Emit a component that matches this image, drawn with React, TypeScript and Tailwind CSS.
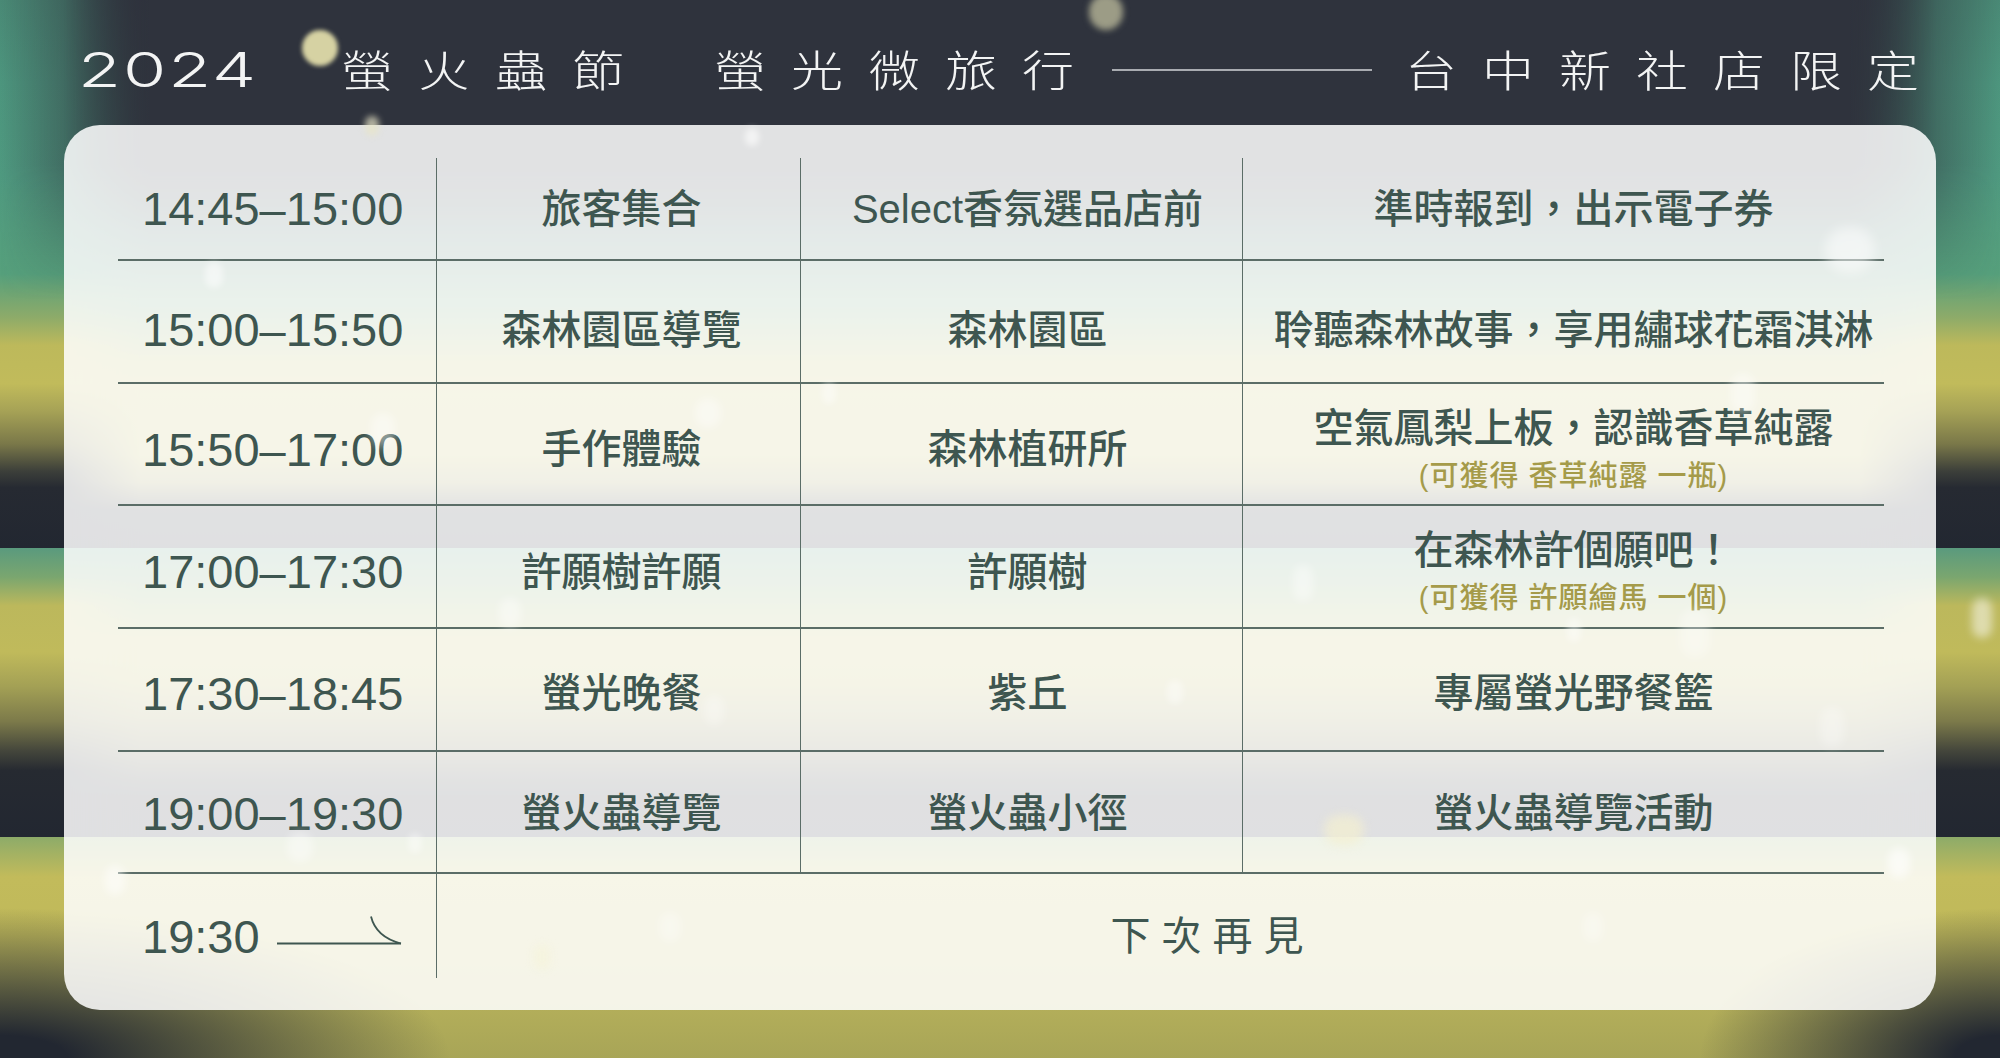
import React from 'react';

type Row = {
  time: string;
  act: string;
  place: string;
  desc: string;
  sub?: string;
  h: string;
  pad: string;
};

const rows: Row[] = [
  { time: '14:45–15:00', act: '旅客集合', place: 'Select香氛選品店前', desc: '準時報到，出示電子券', h: 'h-[103px]', pad: 'pt-0' },
  { time: '15:00–15:50', act: '森林園區導覽', place: '森林園區', desc: '聆聽森林故事，享用繡球花霜淇淋', h: 'h-[123px]', pad: 'pt-[16px]' },
  { time: '15:50–17:00', act: '手作體驗', place: '森林植研所', desc: '空氣鳳梨上板，認識香草純露', sub: '(可獲得 香草純露 一瓶)', h: 'h-[122px]', pad: 'pt-[10px]' },
  { time: '17:00–17:30', act: '許願樹許願', place: '許願樹', desc: '在森林許個願吧！', sub: '(可獲得 許願繪馬 一個)', h: 'h-[123px]', pad: 'pt-[10px]' },
  { time: '17:30–18:45', act: '螢光晚餐', place: '紫丘', desc: '專屬螢光野餐籃', h: 'h-[123px]', pad: 'pt-[7px]' },
  { time: '19:00–19:30', act: '螢火蟲導覽', place: '螢火蟲小徑', desc: '螢火蟲導覽活動', h: 'h-[122px]', pad: 'pt-[2px]' },
];

const bokeh: string[] = [
  'left-[302px] top-[30px] w-[36px] h-[36px] bg-[#d6d2a3] blur-[2px]',
  'left-[1089px] top-[-6px] w-[34px] h-[36px] bg-[#9c9c86] blur-[3px]',
  'left-[365px] top-[116px] w-[14px] h-[20px] bg-[#e8e6c8]/70 blur-[3px]',
  'left-[745px] top-[128px] w-[14px] h-[18px] bg-white/60 blur-[3px]',
  'left-[1825px] top-[227px] w-[50px] h-[46px] bg-white/50 blur-[6px]',
  'left-[287px] top-[832px] w-[26px] h-[30px] bg-white/40 blur-[4px]',
  'left-[408px] top-[833px] w-[14px] h-[20px] bg-white/40 blur-[3px]',
  'left-[105px] top-[865px] w-[20px] h-[30px] bg-white/50 blur-[4px]',
  'left-[659px] top-[912px] w-[22px] h-[30px] bg-white/30 blur-[4px]',
  'left-[533px] top-[944px] w-[18px] h-[26px] bg-[#f6f3d8]/50 blur-[4px]',
  'left-[704px] top-[695px] w-[20px] h-[30px] bg-white/30 blur-[4px]',
  'left-[1167px] top-[680px] w-[16px] h-[24px] bg-white/40 blur-[3px]',
  'left-[1820px] top-[707px] w-[24px] h-[40px] bg-white/30 blur-[5px]',
  'left-[1324px] top-[815px] w-[40px] h-[30px] bg-[#f4f0d0]/70 blur-[5px]',
  'left-[1888px] top-[848px] w-[22px] h-[30px] bg-white/60 blur-[4px]',
  'left-[1583px] top-[912px] w-[20px] h-[30px] bg-white/30 blur-[4px]',
  'left-[371px] top-[413px] w-[24px] h-[34px] bg-white/40 blur-[4px]',
  'left-[695px] top-[398px] w-[26px] h-[30px] bg-white/40 blur-[4px]',
  'left-[822px] top-[382px] w-[14px] h-[22px] bg-white/40 blur-[3px]',
  'left-[499px] top-[598px] w-[22px] h-[30px] bg-white/40 blur-[4px]',
  'left-[1731px] top-[373px] w-[24px] h-[40px] bg-white/40 blur-[4px]',
  'left-[1293px] top-[565px] w-[20px] h-[36px] bg-white/40 blur-[4px]',
  'left-[1567px] top-[618px] w-[14px] h-[24px] bg-white/40 blur-[3px]',
  'left-[1680px] top-[608px] w-[30px] h-[50px] bg-white/30 blur-[5px]',
  'left-[1972px] top-[598px] w-[20px] h-[40px] bg-white/50 blur-[4px]',
  'left-[205px] top-[262px] w-[18px] h-[26px] bg-white/50 blur-[3px]',
];

const headCjk =
  "inline-block font-['Noto_Sans_CJK_TC',sans-serif] text-[52px] font-light tracking-[25px] leading-none scale-y-[0.82] whitespace-nowrap";

const line = 'border-[#5b6d67]';

const edge1 =
  'bg-[image:linear-gradient(to_bottom,#4a8a76_0%,#4d967e_15%,#4f9a80_32%,#56a07c_50%,#8eab69_58%,#bdb95b_63%,#c1bb5b_70%,#a6a256_75%,#7a7849_81%,#3c3f3a_86%,#262a32_89%,#222731_100%)]';
const edge2 =
  'bg-[image:linear-gradient(to_bottom,#5a9a7e_0%,#7aa66f_10%,#bcb85c_20%,#c0ba5b_36%,#a3a055_48%,#7c7a4a_60%,#45473c_70%,#262a31_77%,#222731_100%)]';

export default function App() {
  return (
    <div className="relative w-[2000px] h-[1058px] overflow-hidden bg-[#222731] font-['Liberation_Sans','Noto_Sans_CJK_TC',sans-serif]">
      {/* background bands */}
      <div className="absolute inset-0 flex flex-col">
        <div className="relative h-[548px] bg-[image:linear-gradient(to_bottom,#2f333d_0%,#3a5f57_30%,#4f9a80_42%,#6ea276_56%,#b5b65e_66%,#c1bb5b_72%,#bcb75a_83%,#9a9653_88%,#5a5b43_91%,#2a2e33_93%,#222731_100%)]">
          <div className={`absolute left-0 top-0 bottom-0 w-[140px] ${edge1} [mask-image:linear-gradient(to_right,black_64px,transparent_140px)]`} />
          <div className={`absolute right-0 top-0 bottom-0 w-[140px] ${edge1} [mask-image:linear-gradient(to_left,black_64px,transparent_140px)]`} />
          <div className="absolute left-0 right-0 top-0 h-[300px] bg-[image:linear-gradient(to_right,rgba(47,51,61,0)_0px,#2f333d_150px,#2f333d_1850px,rgba(47,51,61,0)_2000px)] [mask-image:linear-gradient(to_bottom,black_55%,transparent_100%)]" />
        </div>
        <div className="relative h-[289px] bg-[image:linear-gradient(to_bottom,#5a9a7e_0%,#86a96b_16%,#c0ba5b_32%,#b8b359_46%,#9a9653_58%,#6b6a46_70%,#363a37_80%,#242830_86%,#222731_100%)]">
          <div className={`absolute left-0 top-0 bottom-0 w-[140px] ${edge2} [mask-image:linear-gradient(to_right,black_64px,transparent_140px)]`} />
          <div className={`absolute right-0 top-0 bottom-0 w-[140px] ${edge2} [mask-image:linear-gradient(to_left,black_64px,transparent_140px)]`} />
        </div>
        <div className="flex-1 bg-[image:radial-gradient(ellipse_450px_150px_at_0%_100%,#222731_15%,rgba(34,39,49,0)_100%),radial-gradient(ellipse_300px_150px_at_100%_100%,#222731_15%,rgba(34,39,49,0)_100%),linear-gradient(to_bottom,#8dab69_0%,#c2bb5b_18%,#c0b95a_45%,#b4af5a_75%,#a8a557_100%)]" />
      </div>

      {/* header */}
      <div className="relative h-[125px] pt-[15px] flex items-center pl-[78px] text-[#f3f4f4]">
        <div className="w-[263px]">
          <span className="inline-block font-['Inter',sans-serif] text-[70px] font-light tracking-[2px] leading-none scale-y-[0.68]">
            2024
          </span>
        </div>
        <div className="w-[373px]">
          <span className={headCjk}>螢火蟲節</span>
        </div>
        <div className="w-[398px]">
          <span className={headCjk}>螢光微旅行</span>
        </div>
        <div className="w-[260px] h-[2px] bg-[#a9acb1]" />
        <div className="ml-[33px]">
          <span className={headCjk}>台中新社店限定</span>
        </div>
      </div>

      {/* card */}
      <div className="relative mx-[64px] h-[885px] rounded-[36px] bg-[rgba(255,255,255,0.86)] pt-[33px] pl-[54px] pr-[52px] text-[#3e5650]">
        <div className="flex flex-col">
          {rows.map((r, i) => (
            <div key={i} className={`grid grid-cols-[319px_364px_442px_641px] border-b-2 ${line} ${r.h}`}>
              <div className={`flex items-center pl-[24px] border-r ${line} ${r.pad}`}>
                <span className="text-[47px] leading-none whitespace-nowrap">{r.time}</span>
              </div>
              <div className={`flex items-center justify-center pl-[6px] border-r ${line} ${r.pad}`}>
                <span className="text-[40px] font-medium leading-none whitespace-nowrap">{r.act}</span>
              </div>
              <div className={`flex items-center justify-center pl-[12px] border-r ${line} ${r.pad}`}>
                <span className="text-[40px] font-medium leading-none whitespace-nowrap">{r.place}</span>
              </div>
              <div className={`flex flex-col items-center justify-center pl-[20px] ${r.pad}`}>
                <span className="text-[40px] font-medium leading-none whitespace-nowrap">{r.desc}</span>
                {r.sub && (
                  <span className="mt-[14px] text-[29px] font-medium leading-none tracking-[1px] text-[#a59b4a] whitespace-nowrap">
                    {r.sub}
                  </span>
                )}
              </div>
            </div>
          ))}
          <div className="grid grid-cols-[319px_1447px] h-[104px]">
            <div className={`flex items-center pl-[24px] pt-[20px] border-r ${line}`}>
              <span className="text-[47px] leading-none whitespace-nowrap">19:30</span>
              <svg className="ml-[17px] mb-[10px]" width="126" height="30" viewBox="0 0 126 30" fill="none">
                <path d="M0 27.5 H124" stroke="#3e5650" strokeWidth="2" />
                <path d="M94 0.5 Q99 21 124 27.5" stroke="#3e5650" strokeWidth="1.8" fill="none" />
              </svg>
            </div>
            <div className="flex items-center justify-center pl-[104px] pt-[20px]">
              <span className="text-[40px] tracking-[11px] leading-none whitespace-nowrap">下次再見</span>
            </div>
          </div>
        </div>
      </div>

      {/* bokeh */}
      <div className="pointer-events-none absolute inset-0">
        {bokeh.map((c, i) => (
          <div key={i} className={`absolute rounded-full ${c}`} />
        ))}
      </div>
    </div>
  );
}
